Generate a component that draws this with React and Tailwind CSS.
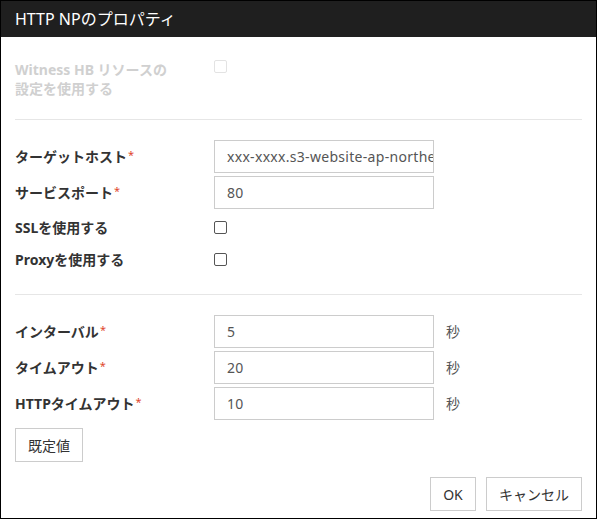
import React from 'react';

const font = { fontFamily: '"Noto Sans", "Noto Sans CJK JP", sans-serif' };

function Label({ children, required }) {
  return (
    <div className="w-[199px] shrink-0 text-[14px] font-bold text-[#333]">
      {children}
      {required && <sup className="text-[#e0472d] text-[11px] font-normal relative top-[-3px] ml-[1px]">*</sup>}
    </div>
  );
}

function TextRow({ label, value, unit }) {
  return (
    <div className="flex items-center h-[33px]">
      <Label required>{label}</Label>
      <div className="w-[220px] h-[33px] border border-[#ccc] flex items-center pl-[12px] pr-[2px] overflow-hidden whitespace-nowrap text-[14px] tracking-[0.3px] text-[#555]">
        {value}
      </div>
      {unit && <span className="ml-[12px] text-[14px] text-[#555]">{unit}</span>}
    </div>
  );
}

function CheckRow({ label }) {
  return (
    <div className="flex items-center h-[32px]">
      <Label>{label}</Label>
      <span className="w-[13px] h-[13px] border border-[#555] rounded-[2px] bg-white" />
    </div>
  );
}

export default function App() {
  return (
    <div style={font} className="w-[597px] h-[519px] border border-black bg-white flex flex-col">
      <div className="h-[36px] bg-[#1f1f1f] text-white text-[16px] pl-[14px] flex items-center">
        HTTP NPのプロパティ
      </div>
      <div className="flex flex-col flex-1 px-[14px]">
        <div className="flex items-start mt-[23px]">
          <div className="w-[199px] shrink-0 text-[14px] font-bold text-[#d0d0d0] leading-[19px]">
            Witness HB リソースの
            <br />
            設定を使用する
          </div>
          <span className="w-[13px] h-[13px] border border-[#e3e3e3] rounded-[2px] bg-white" />
        </div>
        <div className="h-px bg-[#e6e6e6] mt-[21px]" />
        <div className="flex flex-col gap-[3px] mt-[20px]">
          <TextRow label="ターゲットホスト" value="xxx-xxxx.s3-website-ap-northeast-1.amazonaws.com" />
          <TextRow label="サービスポート" value="80" />
        </div>
        <div className="flex flex-col mt-[2px]">
          <CheckRow label="SSLを使用する" />
          <CheckRow label="Proxyを使用する" />
        </div>
        <div className="h-px bg-[#e6e6e6] mt-[19px]" />
        <div className="flex flex-col gap-[3px] mt-[20px]">
          <TextRow label="インターバル" value="5" unit="秒" />
          <TextRow label="タイムアウト" value="20" unit="秒" />
          <TextRow label="HTTPタイムアウト" value="10" unit="秒" />
        </div>
        <div className="mt-[8px]">
          <button className="h-[34px] w-[68px] border border-[#ccc] bg-white text-[14px] text-[#333]">既定値</button>
        </div>
        <div className="flex justify-end gap-[10px] mt-[15px]">
          <button className="h-[34px] w-[46px] border border-[#ccc] bg-white text-[14px] text-[#333]">OK</button>
          <button className="h-[34px] w-[96px] border border-[#ccc] bg-white text-[14px] text-[#333]">キャンセル</button>
        </div>
      </div>
    </div>
  );
}
